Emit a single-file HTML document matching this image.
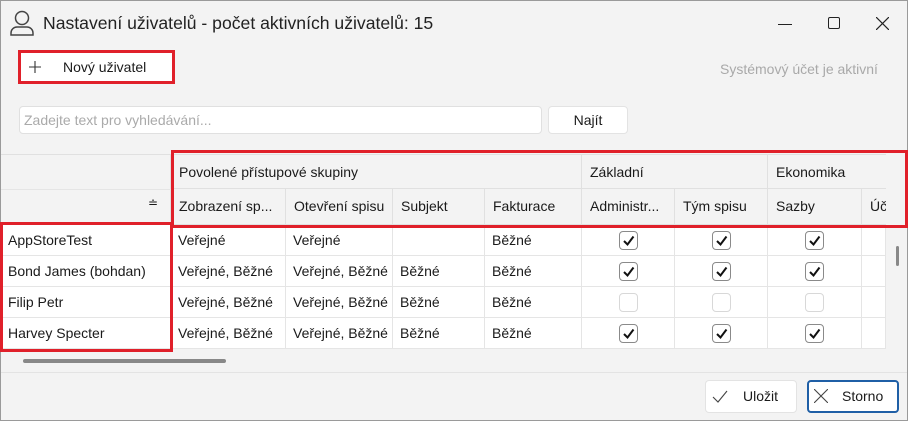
<!DOCTYPE html>
<html><head><meta charset="utf-8"><style>
*{box-sizing:border-box;margin:0;padding:0}
body{width:910px;height:425px;overflow:hidden;background:#fff;font-family:"Segoe UI","Liberation Sans",sans-serif;font-size:14px;color:#1a1a1a;position:relative}
.a{position:absolute}
.win{left:0;top:0;width:908px;height:421px;background:#f3f3f3;border:1px solid #9a9a9a}
.t{white-space:nowrap}
.cell{position:absolute;height:31px;line-height:30px;padding-left:7px;border-right:1px solid #e5e5e5;border-bottom:1px solid #e5e5e5;background:#fff;white-space:nowrap;overflow:hidden}
.hc{position:absolute;line-height:34px;padding-left:8px;border-right:1px solid #e0e0e0;border-bottom:1px solid #e0e0e0;white-space:nowrap;overflow:hidden;background:#f3f3f3}
.cb{position:absolute;width:19px;height:19px;border:1px solid #8a8a8a;border-radius:4px;background:#fff}
.cb.off{border-color:#d8d8d8}
.red{position:absolute;border:3px solid #e0202a}
</style></head><body>
<div class="a win"></div>
<svg class="a" style="left:9px;top:10px" width="26" height="26" viewBox="0 0 26 26"><circle cx="13" cy="8" r="6.5" fill="none" stroke="#444" stroke-width="1.5"/><path d="M2 25 v-2 a6 6 0 0 1 6-6 h10 a6 6 0 0 1 6 6 v2 z" fill="none" stroke="#444" stroke-width="1.5"/></svg>
<div class="a t" style="left:43px;top:13px;font-size:17.6px;color:#222">Nastavení uživatelů - počet aktivních uživatelů: 15</div>
<div class="a" style="left:778px;top:24px;width:14px;height:1px;background:#222"></div>
<div class="a" style="left:828px;top:17px;width:12px;height:12px;border:1px solid #222;border-radius:2px"></div>
<svg class="a" style="left:876px;top:17px" width="13" height="13"><path d="M0 0L13 13M13 0L0 13" stroke="#222" stroke-width="1.2"/></svg>
<div class="a" style="left:21px;top:53px;width:151px;height:28px;background:#fff"></div>
<svg class="a" style="left:29px;top:61px" width="12" height="12"><path d="M6 0V12M0 6H12" stroke="#333" stroke-width="1.1"/></svg>
<div class="a t" style="left:63px;top:59px">Nový uživatel</div>
<div class="red" style="left:18px;top:50px;width:157px;height:34px"></div>
<div class="a t" style="left:720px;top:61px;color:#a9a9a9">Systémový účet je aktivní</div>
<div class="a" style="left:19px;top:106px;width:523px;height:28px;background:#fff;border:1px solid #e0e0e0;border-radius:4px"></div>
<div class="a t" style="left:24px;top:112px;color:#aaa">Zadejte text pro vyhledávání...</div>
<div class="a" style="left:548px;top:106px;width:80px;height:28px;background:#fff;border:1px solid #e3e3e3;border-radius:4px;text-align:center;line-height:26px">Najít</div>
<div class="a" style="left:1px;top:154px;width:885px;height:1px;background:#e0e0e0"></div>
<div class="hc" style="left:1px;top:155px;width:170px;height:70px;border-bottom:1px solid #e0e0e0"></div>
<div class="a" style="left:1px;top:189px;width:170px;height:1px;background:#e5e5e5"></div>
<div class="a t" style="left:148px;top:196px;font-size:12px">≐</div>
<div class="hc" style="left:171px;top:155px;width:411px;height:34px">Povolené přístupové skupiny</div>
<div class="hc" style="left:582px;top:155px;width:186px;height:34px">Základní</div>
<div class="hc" style="left:768px;top:155px;width:118px;height:34px;border-right:none">Ekonomika</div>
<div class="hc" style="left:171px;top:189px;width:115px;height:36px">Zobrazení sp...</div>
<div class="hc" style="left:286px;top:189px;width:107px;height:36px">Otevření spisu</div>
<div class="hc" style="left:393px;top:189px;width:92px;height:36px">Subjekt</div>
<div class="hc" style="left:485px;top:189px;width:97px;height:36px">Fakturace</div>
<div class="hc" style="left:582px;top:189px;width:93px;height:36px">Administr...</div>
<div class="hc" style="left:675px;top:189px;width:93px;height:36px">Tým spisu</div>
<div class="hc" style="left:768px;top:189px;width:94px;height:36px">Sazby</div>
<div class="hc" style="left:862px;top:189px;width:24px;height:36px;border-right:none">Účto</div>
<div id="rows"></div>
<div class="a" style="left:886px;top:225px;width:21px;height:124px;background:#f3f3f3"></div>
<div class="a" style="left:896px;top:246px;width:3px;height:20px;background:#888;border-radius:2px"></div>
<div class="a" style="left:23px;top:359px;width:203px;height:4px;background:#888;border-radius:2px"></div>
<div class="a" style="left:1px;top:372px;width:906px;height:1px;background:#e3e3e3"></div>
<div class="red" style="left:171px;top:150px;width:737px;height:78px"></div>
<div class="red" style="left:0px;top:222px;width:173px;height:130px"></div>
<div class="a" style="left:705px;top:380px;width:92px;height:33px;background:#fff;border:1px solid #e3e3e3;border-radius:4px"></div>
<svg class="a" style="left:712px;top:390px" width="16" height="13"><path d="M1 7L6 12L15 1" fill="none" stroke="#444" stroke-width="1.1"/></svg>
<div class="a t" style="left:743px;top:388px">Uložit</div>
<div class="a" style="left:807px;top:380px;width:92px;height:33px;background:#fff;border:2px solid #1f5fa6;border-radius:4px"></div>
<svg class="a" style="left:814px;top:389px" width="14" height="14"><path d="M0 0L14 14M14 0L0 14" stroke="#444" stroke-width="1.1"/></svg>
<div class="a t" style="left:842px;top:388px">Storno</div>
<script>
var rows=[["AppStoreTest","Veřejné","Veřejné","","Běžné",1],["Bond James (bohdan)","Veřejné, Běžné","Veřejné, Běžné","Běžné","Běžné",1],["Filip Petr","Veřejné, Běžné","Veřejné, Běžné","Běžné","Běžné",0],["Harvey Specter","Veřejné, Běžné","Veřejné, Běžné","Běžné","Běžné",1]];
var cols=[[1,170],[171,115],[286,107],[393,92],[485,97],[582,93],[675,93],[768,94],[862,24]];
var h="";
rows.forEach(function(r,i){var y=225+i*31;
for(var c=0;c<cols.length;c++){var txt=c<5?r[c]:"";h+='<div class="cell" style="left:'+cols[c][0]+'px;top:'+y+'px;width:'+cols[c][1]+'px">'+txt+'</div>';}
for(var k=5;k<8;k++){var x=cols[k][0]+cols[k][1]/2-10;
h+='<div class="cb'+(r[5]?'':' off')+'" style="left:'+x+'px;top:'+(y+6)+'px">'+(r[5]?'<svg width="17" height="17" style="position:absolute;left:0;top:0"><path d="M4 9L7.5 12.5L13.5 4.5" fill="none" stroke="#111" stroke-width="2"/></svg>':'')+'</div>';}
});
document.getElementById("rows").innerHTML=h;
</script>
</body></html>
